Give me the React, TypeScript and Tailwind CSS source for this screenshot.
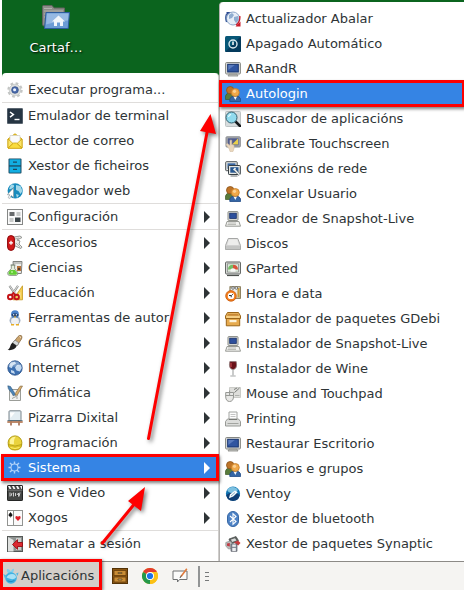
import type { ReactNode } from "react"

type Item = { label: string; icon: ReactNode; sub?: boolean; active?: boolean }

function Icon({ children }: { children: ReactNode }) {
    return (
        <svg viewBox="0 0 16 16" className="h-4 w-4 shrink-0" aria-hidden="true">
            {children}
        </svg>
    )
}

const gear = (
    <Icon>
        <circle cx="8" cy="8" r="6.4" fill="none" stroke="#c3c5c4" strokeWidth="2.6" strokeDasharray="2.6 2.4" />
        <circle cx="8" cy="8" r="5.8" fill="#dcdedd" stroke="#c3c5c4" strokeWidth=".7" />
        <circle cx="8" cy="8" r="3.3" fill="#4b6cac" stroke="#34518c" strokeWidth=".8" />
        <circle cx="7.6" cy="7.8" r="1.5" fill="#f1f5fc" />
    </Icon>
)

const terminal = (
    <Icon>
        <rect x=".2" y=".2" width="15.6" height="15.6" rx=".6" fill="#263543" />
        <path d="M3 4l3.4 2.6L3 9.2" fill="none" stroke="#fff" strokeWidth="1.5" />
        <path d="M7.5 11.5h5" stroke="#fff" strokeWidth="1.4" />
    </Icon>
)

const mail = (
    <Icon>
        <path d="M1 6L8 .8 15 6v9H1z" fill="#f5d236" stroke="#cfa50f" />
        <path d="M3 2.5h10v7L8 12 3 9.500z" fill="#fafafa" stroke="#cfcfc8" strokeWidth=".7" />
        <path d="M1 6l5 4.500L1 15zM15 6l-5 4.500 5 4.500z" fill="#fae56a" stroke="#cfa50f" strokeWidth=".8" />
        <path d="M1 15.300l5.500-5.300h3L15 15.300z" fill="#f9dc3e" stroke="#cfa50f" strokeWidth=".8" />
    </Icon>
)

const fileCabinet = (
    <Icon>
        <rect x="1.500" y=".5" width="13" height="15" rx="1" fill="#1c4960" />
        <rect x="2.500" y="1.300" width="11" height="6" fill="#12aee2" />
        <rect x="2.500" y="8.600" width="11" height="6" fill="#12aee2" />
        <path d="M6 4.200h4M6 11.400h4" stroke="#1c4960" strokeWidth="1.300" />
    </Icon>
)

const browser = (
    <Icon>
        <circle cx="8.200" cy="7.800" r="7.600" fill="#188bbd" />
        <path d="M4 1.500C7 1 8 3 6.500 4.500 5 5 4 7 2 6zM9 2l4.500 1 2 5-2 3-2-3-2.500-1zM9 11l3 1-2 3z" fill="#a3d8e9" />
        <path d="M6.500 5v9.500l-2.200-2-1.500 3-1.600-.8 1.500-3H.2z" fill="#fff" stroke="#8b9497" strokeWidth=".6" />
    </Icon>
)

const settings = (
    <Icon>
        <rect x=".5" y=".5" width="15" height="15" fill="#fafafa" stroke="#858786" />
        <rect x="2.500" y="3" width="5" height="4" fill="#686b6c" />
        <rect x="9.500" y="3" width="4" height="4" fill="#c8cac9" />
        <rect x="2.500" y="9" width="4" height="4" fill="#c8cac9" />
        <rect x="8" y="8.500" width="5.500" height="4.500" fill="#3c4549" />
    </Icon>
)

const accessories = (
    <Icon>
        <path d="M7 2l6-1 2 1.500-5 2.500 3 1-1 3 3 3-1 1.500-6-2.500z" fill="#e9e9e7" stroke="#8c8e8b" strokeWidth=".9" />
        <path d="M8 4l4-1M9 8l4 4" stroke="#a2a4a1" strokeWidth=".8" />
        <rect x=".6" y=".6" width="6.800" height="14.800" rx="3.400" fill="#d2191b" stroke="#8c0709" />
        <path d="M4 5.800v4M2 7.800h4" stroke="#fff" strokeWidth="1.300" />
    </Icon>
)

const science = (
    <Icon>
        <path d="M6 1.500h9l-.7 12H7z" fill="#ededeb" stroke="#80827e" />
        <path d="M6 3h9" stroke="#999b97" />
        <path d="M10 6h4v5h-4z" fill="#b7713b" />
        <path d="M11 8h2v2h-2z" fill="#503c2c" />
        <path d="M3.500 5h5M4.300 5v3.500L.8 12.500q-.5 2.800 1.500 2.900h7q2-.2 1.300-2.900l-3-4V5z" fill="#e4eddc" stroke="#788473" strokeWidth=".8" />
        <path d="M1.700 12l1.800-2h4.300l2 2.500q.8 2-1 2.200H2.700q-1.700-.4-1-2.700z" fill="#62ce33" />
        <circle cx="5" cy="12" r="1" fill="#b9ef96" />
    </Icon>
)

const education = (
    <Icon>
        <path d="M15.500.8v14H6z" fill="#f4cd50" stroke="#c79a1f" strokeWidth=".8" />
        <path d="M13.300 7v5.500H10z" fill="#fff6cf" />
        <path d="M2.500.8L9.500 11M11 .8L4 11" stroke="#8f9290" strokeWidth="2.200" />
        <path d="M2.700 1L9 10M10.800 1L4.500 10" stroke="#e8e8e6" strokeWidth=".9" />
        <ellipse cx="3.300" cy="12" rx="2.300" ry="2.300" fill="none" stroke="#c41216" strokeWidth="2" />
        <ellipse cx="9.600" cy="12" rx="2.300" ry="2.300" fill="none" stroke="#c41216" strokeWidth="2" />
        <path d="M4.500 10.500L6.500 8l2 2.500" fill="none" stroke="#c41216" strokeWidth="1.800" />
    </Icon>
)

const authoring = (
    <Icon>
        <ellipse cx="8" cy="10.500" rx="5.500" ry="4.500" fill="#a3b1c3" />
        <ellipse cx="8" cy="4.400" rx="3.900" ry="4.100" fill="#4a82cb" />
        <path d="M4.700 4.300q3.300-2 6.600 0v1.500q-3.300 2-6.600 0z" fill="#27426c" />
        <circle cx="6.600" cy="4.800" r=".7" fill="#dbe7f6" />
        <circle cx="9.400" cy="4.800" r=".7" fill="#dbe7f6" />
        <ellipse cx="8" cy="11.200" rx="3.900" ry="3.700" fill="#eff1f4" />
        <path d="M6.500 6.500h3L8 8z" fill="#f1b326" />
        <path d="M4 14.800h3M9 14.800h3" stroke="#e8ae25" strokeWidth="1.400" />
    </Icon>
)

const graphics = (
    <Icon>
        <path d="M11 1.500q2-2 3.300-.9t.2 3.400L10.500 10 6.700 7z" fill="#caa36c" stroke="#80613a" strokeWidth=".7" />
        <path d="M12.500 1.500l1.500 1.200" stroke="#f5e5cf" />
        <path d="M8 5l4 3-2 3-4.500-3z" fill="#d7dada" stroke="#777" strokeWidth=".7" />
        <path d="M5.500 7.800l4.200 3C8.500 14.200 5 15.600.6 15 4 13 2.800 9.500 5.500 7.800z" fill="#202020" />
    </Icon>
)

const globe = (
    <Icon>
        <circle cx="8" cy="8" r="7.200" fill="#3d70b1" stroke="#224b85" strokeWidth=".8" />
        <path d="M4 2.500l4-.8 1 2-3 1.500-1.200 3L2 7q0-3 2-4.500zM10 5l3.500-.5L14.800 8l-2 3.500-3.300-1-1.500-3zM4 10l3 1 1 3-4-1.500z" fill="#c5daf0" />
        <ellipse cx="7.500" cy="4" rx="5" ry="2.800" fill="#fff" opacity=".3" />
    </Icon>
)

const office = (
    <Icon>
        <path d="M2.500 4.500h11v11h-11z" fill="#f2f2f0" stroke="#9b9d98" />
        <path d="M5 13.500l6-3M5 10h2M9 13h2" stroke="#9fa19e" />
        <path d="M.8.8l2.700.7 5 8-1.800 1.300-5.300-7z" fill="#4b83b7" stroke="#2f597e" strokeWidth=".6" />
        <path d="M15.500 1L13 1.200 8.300 8.500l.2 2 2-.7z" fill="#dbae6b" stroke="#79603b" strokeWidth=".6" />
    </Icon>
)

const whiteboard = (
    <Icon>
        <path d="M4 10v5.500M12 10v5.500" stroke="#a1684c" strokeWidth="1.600" />
        <rect x="2" y=".8" width="12" height="9.700" rx=".8" fill="#e3edf2" stroke="#78848b" />
        <path d="M3 2.500h5L3.500 8z" fill="#fff" />
        <path d="M.3 12h15.400" stroke="#b87e5c" strokeWidth="1.800" />
        <path d="M.5 10.600h15" stroke="#536d7a" />
    </Icon>
)

const helmet = (
    <Icon>
        <circle cx="8" cy="7.800" r="6.900" fill="#ead33d" stroke="#b39c12" />
        <path d="M1.200 9.500q6.800 3 13.600 0-.4 5.500-6.800 5.500t-6.800-5.500z" fill="#dec328" stroke="#b39c12" strokeWidth=".8" />
        <path d="M3 9V5q2-3.500 6-3.300-2.500 1.500-2 7.500z" fill="#fdf49b" />
        <path d="M3.500 12.500q4.500 2 9 0" fill="none" stroke="#fff16e" />
    </Icon>
)

const system = (
    <Icon>
        <circle cx="7.500" cy="7.500" r="3.500" fill="none" stroke="#b1d2f8" strokeWidth="1.100" />
        <path d="M7.500 1.500v2.500M7.500 11v2.500M1.500 7.500h2.500M11 7.500h2.500M3 3l2.100 2.100M9.900 9.900L12 12M12 3L9.900 5.100M5.100 9.900L3 12" stroke="#b1d2f8" strokeWidth="1.400" />
    </Icon>
)

const video = (
    <Icon>
        <rect x=".5" y=".5" width="15" height="15" rx=".6" fill="#444644" stroke="#242524" />
        <path d="M1 1h2l1.500 3h-2zM5 1h2l1.500 3h-2zM9 1h2l1.500 3h-2zM13 1h2v3h-.5z" fill="#f5f5f5" />
        <path d="M.5 5.200h15" stroke="#888" strokeWidth=".7" />
        <path d="M3 7.500v4M5 8l-1 3M6.500 7.500v4M8.500 8v3M10 10l1.500-2v3.500M13 7.500l-1 4" stroke="#dedede" strokeWidth=".9" />
    </Icon>
)

const cards = (
    <Icon>
        <rect x=".5" y=".5" width="6" height="15" fill="#fff" stroke="#929491" />
        <rect x="6.500" y=".5" width="9" height="15" fill="#fafafa" stroke="#929491" />
        <path d="M3.500 2.500q2 2 1.600 3.200-.5.800-1.600.2-1.100.6-1.600-.2Q1.500 4.500 3.500 2.500zM3.500 5v2.500" fill="#111" stroke="#111" strokeWidth=".6" />
        <path d="M11 11L8.400 8.200q-.4-2 1.300-2.100.9 0 1.300.9.400-.9 1.300-.9 1.700.1 1.300 2.100z" fill="#de1f27" />
    </Icon>
)

const logout = (
    <Icon>
        <rect x=".5" y=".5" width="15" height="15" fill="#8f9391" stroke="#565a58" />
        <path d="M1 1l5.500 3v11.500H1z" fill="#dfe1df" />
        <path d="M9 2h5v12H9z" fill="#c9cdca" />
        <path d="M5.500 8.500l5-4.800v2.800h5v4h-5v2.800z" fill="#dc2931" stroke="#950c13" strokeWidth=".9" />
    </Icon>
)

const updater = (
    <Icon>
        <path d="M3 1v6M1.500 2h5" stroke="#2c4b91" strokeWidth="1.800" />
        <circle cx="8" cy="7.500" r="6.500" fill="#e6eef7" stroke="#8ea6c8" />
        <path d="M4 4l3-2 2 2-2 3-3 1zM9 6l4-1 1 4-3 3-2-3z" fill="#8fadd0" />
        <path d="M1.500 3q-1.500 4 0 8" fill="none" stroke="#274c91" strokeWidth="1.200" />
        <path d="M14.800 5q.7 5.500-3.800 9.200" fill="none" stroke="#ca1b2a" strokeWidth="1.300" />
        <path d="M10.500 15.500h5v-5z" fill="#ca1b2a" />
    </Icon>
)

const power = (
    <Icon>
        <rect x="0" y="0" width="16" height="16" rx="1.500" fill="#075777" />
        <path d="M0 16L16 0v14.500q0 1.500-1.500 1.500z" fill="#043a5c" />
        <circle cx="8" cy="8" r="4" fill="none" stroke="#dce9ee" strokeWidth="1.400" />
        <path d="M8 5.500v3.500" stroke="#fff" strokeWidth="1.500" />
    </Icon>
)

const monitor = (
    <Icon>
        <rect x=".6" y="1.500" width="14.800" height="11.500" rx="1" fill="#dededb" stroke="#858782" />
        <rect x="2.700" y="3.300" width="10.600" height="7.700" fill="#3055a0" stroke="#16346f" />
        <path d="M3.300 4h6.500L3.300 9z" fill="#5a7bbd" />
        <path d="M4 13.200h8l1 1.800H3z" fill="#c4c6c2" stroke="#858782" strokeWidth=".8" />
    </Icon>
)

const users = (
    <Icon>
        <path d="M.5 13.500V10Q1 7 5 7t4 3v3.500z" fill="#587b3b" stroke="#3d5926" strokeWidth=".7" />
        <circle cx="5.200" cy="4.200" r="3.700" fill="#bf7427" stroke="#8a5219" strokeWidth=".8" />
        <path d="M4.800 15.500v-2.500q.7-3 5.400-3t5.400 3v2.500z" fill="#3465a4" stroke="#204a87" strokeWidth=".8" />
        <path d="M8.500 10.500l1.800 3.500 1.800-3.500z" fill="#f5f7fa" />
        <circle cx="10.300" cy="6.500" r="4" fill="#f0a94a" stroke="#c07a28" strokeWidth=".8" />
        <circle cx="9.500" cy="5.300" r="1.600" fill="#fbd194" />
    </Icon>
)

const search = (
    <Icon>
        <rect x=".5" y=".5" width="15" height="15" rx="1" fill="#d7dcdd" stroke="#bdc3c4" />
        <path d="M10.500 10.500l4.500 4.500" stroke="#16191b" strokeWidth="2.500" strokeLinecap="round" />
        <circle cx="6.500" cy="6.500" r="5.500" fill="#91dbee" stroke="#34606f" />
        <path d="M3.500 6q.3-2.300 2.600-2.700" fill="none" stroke="#e3fbff" strokeWidth="1.200" />
    </Icon>
)

const touchscreen = (
    <Icon>
        <rect x="1" y=".8" width="14.300" height="10.200" rx=".8" fill="#a4a7ac" stroke="#8a8d92" />
        <rect x="2.800" y="2.300" width="10.700" height="7" fill="#525d8e" />
        <path d="M13 2.500v6H7z" fill="#ead04b" />
        <path d="M4.300 13L1 8.500l1.500-1L5 9.500V4.200h1.700v4.300l2.300.8v3.200L8 15.500H5z" fill="#ead7bd" stroke="#d3bfa5" strokeWidth=".6" />
    </Icon>
)

const network = (
    <Icon>
        <rect x=".7" y=".7" width="11.500" height="9" rx=".7" fill="#e6e8e5" stroke="#4c5254" />
        <rect x="2.500" y="2.300" width="8" height="5.500" fill="#3867a4" />
        <rect x="3.500" y="4.500" width="11.800" height="9" rx=".7" fill="#e6e8e5" stroke="#353e43" />
        <rect x="5.300" y="6.200" width="8.200" height="5.500" fill="#275892" />
        <path d="M5.500 15h7" stroke="#6c7274" />
        <path d="M9.500 8.500l5 5.300" stroke="#4c5254" strokeWidth="2.500" />
        <path d="M9.500 8.500l5 5.300M8.500 9l2-2" stroke="#edf4f7" strokeWidth="1.500" />
    </Icon>
)

const computer = (
    <Icon>
        <rect x="3" y=".6" width="10" height="8.800" rx=".7" fill="#deded9" stroke="#888a85" />
        <rect x="4.700" y="2.200" width="6.600" height="5.200" fill="#2d4f9c" stroke="#162f69" strokeWidth=".8" />
        <path d="M2 10.500h12l1.500 4.700H.5z" fill="#f2f2f0" stroke="#989a95" />
        <path d="M3 12h8M2.500 13.500H11" stroke="#b4b6b0" strokeWidth=".9" />
    </Icon>
)

const disk = (
    <Icon>
        <path d="M3.300 2.500h9.400L15.500 9.500v4H.5v-4z" fill="#dededd" stroke="#a5a6a5" />
        <path d="M.8 9.500h14.400v3.700H.8z" fill="#c4c5c4" />
        <path d="M3.800 3.500h8.400L13.500 9h-11z" fill="#ededec" />
    </Icon>
)

const gparted = (
    <Icon>
        <rect x=".6" y="1" width="14.800" height="12" rx=".7" fill="#e2e4e1" stroke="#575b58" />
        <rect x="2.500" y="2.800" width="11" height="8.300" fill="#dceadb" stroke="#7e827e" strokeWidth=".7" />
        <path d="M8 8.500V3.800Q3 3.800 3 8.500z" fill="#74bd66" />
        <path d="M8 8.500h5Q13 4 8 3.800z" fill="#d8533b" />
        <path d="M5.500 8.500q2.500-2.500 5 0v2.300h-5z" fill="#f8f8f7" />
        <path d="M2 14.500h12" stroke="#4d514e" strokeWidth="1.200" />
    </Icon>
)

const clock = (
    <Icon>
        <rect x="5" y=".8" width="10.300" height="11.500" fill="#ececea" stroke="#75643b" />
        <path d="M13.500 2v9.500" stroke="#c99b3a" strokeWidth="2.200" />
        <circle cx="8" cy="2" r="1.300" fill="#fff" stroke="#55595b" strokeWidth=".8" />
        <circle cx="11.300" cy="2" r="1.300" fill="#fff" stroke="#55595b" strokeWidth=".8" />
        <circle cx="6" cy="9.900" r="5.300" fill="#f57e1d" stroke="#c65a0b" strokeWidth=".8" />
        <circle cx="6" cy="9.900" r="3.200" fill="#fff" />
        <path d="M4 9.500h2.500l1.300-1.300M6.200 9.800v1.500" fill="none" stroke="#303030" />
    </Icon>
)

const box = (
    <Icon>
        <path d="M1.300 6.500h13.400v8.300H1.300z" fill="#e6aa4e" stroke="#9a6519" />
        <path d="M2.500 1.500h11L15.500 5v2.500H.5V5z" fill="#efbd67" stroke="#9a6519" />
        <path d="M3 2.800h10l1 2H2z" fill="#c78837" />
        <path d="M1.500 6h13" stroke="#fbe0a2" />
        <rect x="4.500" y="9" width="7" height="2.200" fill="#fcf3dc" />
    </Icon>
)

const wine = (
    <Icon>
        <path d="M4.800.6h6.400q1.600 7.400-3.200 8Q3.200 8 4.800.6z" fill="#6b1118" stroke="#8e7778" strokeWidth=".8" />
        <path d="M6 2v4" stroke="#c0474d" strokeWidth="1.200" />
        <path d="M8 8.500v6" stroke="#a7a8a8" strokeWidth="1.200" />
        <path d="M5.300 15h5.400" stroke="#b4b6b6" strokeWidth="1.200" />
    </Icon>
)

const mouse = (
    <Icon>
        <path d="M4.500 1.500h11v10h-11z" fill="#dededb" stroke="#cbccc8" />
        <path d="M14.500 2L9.500 6.500M9 3.500l3-1.500" stroke="#7d807c" />
        <path d="M10 9.500h4.500" stroke="#b0b2ae" />
        <path d="M.7 6.500h7.800V11q-.3 4.400-3.900 4.500Q1 15.400.7 11z" fill="#e8e8e6" stroke="#979995" />
        <path d="M.7 9.500h7.800M4.600 4.500v5" stroke="#979995" />
    </Icon>
)

const printer = (
    <Icon>
        <path d="M4 1h8v8H4z" fill="#fdfdfd" stroke="#a2a4a1" />
        <path d="M5.500 3.500h5M5.500 5.500h5" stroke="#c4c4c4" />
        <path d="M2.500 8h11l2 2.500v4.500H.5v-4.500z" fill="#dcdddb" stroke="#989a96" />
        <path d="M4 8.500h8" stroke="#777975" />
        <path d="M2.500 12.500h11" stroke="#a2a4a0" />
    </Icon>
)

const ventoy = (
    <Icon>
        <circle cx="8" cy="7.700" r="7.100" fill="#0e73b2" />
        <path d="M1.200 9q7-5.500 13.600 0-1 5.800-6.800 6-5.800-.2-6.800-6z" fill="#0e3f75" />
        <ellipse cx="7.500" cy="4" rx="5.200" ry="3" fill="#7cc1e1" />
        <path d="M4 12.300l1-4L10 4.500l2.700 1.800-4.500 4.200z" fill="#f3fafd" />
        <path d="M6 10l4-3.500" stroke="#87adc5" />
    </Icon>
)

const bluetooth = (
    <Icon>
        <rect x="2.500" y=".5" width="11" height="15" rx="5.500" fill="#4e83c6" stroke="#3566a4" />
        <path d="M5 5l6 5.500L8 13.300V2.700L11 5.500 5 11" fill="none" stroke="#fff" strokeWidth="1.100" />
    </Icon>
)

const synaptic = (
    <Icon>
        <path d="M4 3l7-2.500 2.500 4-8 4z" fill="#5d6160" stroke="#474a49" strokeWidth=".7" />
        <path d="M6 3.500l4-1.300 1.500 2.300-4.500 1.500z" fill="#d9dbda" />
        <path d="M.8 6.500L5 5l3 3-.5 4.500-4 .5L.8 10z" fill="#bababa" stroke="#8d8f8e" strokeWidth=".7" />
        <path d="M2 7.500L4.800 7v3.500L2 9.700z" fill="#c13b44" />
        <path d="M9 6.500l4-2 2.500 2.500-2.300 2.500z" fill="#c83a3d" />
        <path d="M6 8h6v7.300H6z" fill="#848a95" stroke="#5b6069" strokeWidth=".7" />
        <path d="M7.300 8.500h3.500v2.300H7.300zM7.300 12h3.500v3H7.300z" fill="#eceef0" />
    </Icon>
)

const runItems: Item[] = [{ label: "Executar programa...", icon: gear }]

const launchers: Item[] = [
    { label: "Emulador de terminal", icon: terminal },
    { label: "Lector de correo", icon: mail },
    { label: "Xestor de ficheiros", icon: fileCabinet },
    { label: "Navegador web", icon: browser },
]

const configItems: Item[] = [{ label: "Configuración", icon: settings, sub: true }]

const categories: Item[] = [
    { label: "Accesorios", icon: accessories, sub: true },
    { label: "Ciencias", icon: science, sub: true },
    { label: "Educación", icon: education, sub: true },
    { label: "Ferramentas de autor", icon: authoring, sub: true },
    { label: "Gráficos", icon: graphics, sub: true },
    { label: "Internet", icon: globe, sub: true },
    { label: "Ofimática", icon: office, sub: true },
    { label: "Pizarra Dixital", icon: whiteboard, sub: true },
    { label: "Programación", icon: helmet, sub: true },
    { label: "Sistema", icon: system, sub: true, active: true },
    { label: "Son e Video", icon: video, sub: true },
    { label: "Xogos", icon: cards, sub: true },
]

const sessionItems: Item[] = [{ label: "Rematar a sesión", icon: logout }]

const groups = [runItems, launchers, configItems, categories, sessionItems]

const systemItems: Item[] = [
    { label: "Actualizador Abalar", icon: updater },
    { label: "Apagado Automático", icon: power },
    { label: "ARandR", icon: monitor },
    { label: "Autologin", icon: users, active: true },
    { label: "Buscador de aplicacións", icon: search },
    { label: "Calibrate Touchscreen", icon: touchscreen },
    { label: "Conexións de rede", icon: network },
    { label: "Conxelar Usuario", icon: users },
    { label: "Creador de Snapshot-Live", icon: computer },
    { label: "Discos", icon: disk },
    { label: "GParted", icon: gparted },
    { label: "Hora e data", icon: clock },
    { label: "Instalador de paquetes GDebi", icon: box },
    { label: "Instalador de Snapshot-Live", icon: computer },
    { label: "Instalador de Wine", icon: wine },
    { label: "Mouse and Touchpad", icon: mouse },
    { label: "Printing", icon: printer },
    { label: "Restaurar Escritorio", icon: monitor },
    { label: "Usuarios e grupos", icon: users },
    { label: "Ventoy", icon: ventoy },
    { label: "Xestor de bluetooth", icon: bluetooth },
    { label: "Xestor de paquetes Synaptic", icon: synaptic },
]

// red frame drawn around the entry to click
function Mark() {
    return <span className="pointer-events-none absolute -inset-x-px -inset-y-px z-10 border-3 border-[#fe0000] shadow-[1px_2px_3px_rgba(0,0,0,0.5)]" />
}

function MenuItem({ item }: { item: Item }) {
    return (
        <li className="relative">
            <button
                type="button"
                className={`flex h-[25px] w-full items-center gap-[5px] pr-2 pl-[5px] text-left whitespace-nowrap ${item.active ? "bg-[#3584e4] text-white" : "text-[#2e3436]"}`}
            >
                {item.icon}
                <span className="grow">{item.label}</span>
                {item.sub && (
                    <svg viewBox="0 0 6 12" className="h-3 w-[6px] shrink-0" aria-hidden="true">
                        <path d="M0 0L6 6 0 12z" fill="currentColor" />
                    </svg>
                )}
            </button>
            {item.active && <Mark />}
        </li>
    )
}

function HomeFolder() {
    return (
        <button type="button" className="flex w-[108px] flex-col items-center gap-[10px] pt-1 text-white">
            <svg viewBox="0 0 28 26" className="h-[26px] w-7" aria-hidden="true">
                <path d="M.5 2.500q0-1 1-1H10l2 2.500h10.500v18H2q-1.500 0-1.500-2z" fill="#8d8d89" stroke="#62635f" />
                <path d="M2 4.500h8M2 7h19M2 10h3M2 13h3" stroke="#b1b1ad" />
                <path d="M4 8.500h23.500l-1.300 16H2.500z" fill="#6c9cd5" stroke="#2d5c9c" />
                <path d="M5 9.500h21.500l-.5 7q-10 .5-22 4z" fill="#96b9e3" />
                <path d="M16.500 11.500l6.500 6h-2v4.500h-3v-3.500h-3V22h-3v-4.500h-2z" fill="#f2f6fb" />
            </svg>
            <span className="[text-shadow:1px_1px_2px_#000]">Cartaf…</span>
        </button>
    )
}

function Taskbar() {
    return (
        <footer className="flex h-[29px] items-center border-t border-[#8c8a87] bg-[#f5f4f2]">
            <div className="relative h-7 w-[102px]">
                <button type="button" className="flex h-7 w-full items-center gap-[2px] bg-[#d4cfca] pl-[3px] text-[#2e3436]">
                    <Icon>
                        <path d="M6 5.500Q3 3.500 4 1q3 0 4 3Q8.500.8 11 .8q.5 2.500-2 4.700z" fill="#7fd0ee" />
                        <circle cx="8" cy="10" r="5.800" fill="#3fb2e2" />
                        <path d="M.3 6l3.200 1.500-1.500 3zM13 5.500l2.500-1-.8 3.500z" fill="#52b8e0" />
                        <path d="M3.500 9.500Q5 6 9 6t4 3.500q-2 2.500-5 1.500t-4.500-1.500z" fill="#a9e1f5" />
                        <path d="M4.500 12.800q3.500 2 7-.3" fill="none" stroke="#1b86bb" strokeWidth=".9" />
                    </Icon>
                    Aplicacións
                </button>
                <span className="pointer-events-none absolute -top-[3px] right-0 bottom-0 left-0 z-10 border-3 border-[#fe0000] shadow-[1px_1px_3px_rgba(0,0,0,0.5)]" />
            </div>
            <nav className="flex items-center gap-[14px] pl-[10px]">
                <button type="button" aria-label="Ficheiros">
                    <svg viewBox="0 0 16 16" className="h-4 w-4" aria-hidden="true">
                        <rect x=".5" y=".5" width="15" height="15" fill="#8b5612" stroke="#533207" />
                        <path d="M2 2.500h12v5H2zM2 9h12v5H2z" fill="#c98d36" stroke="#643e0c" strokeWidth=".8" />
                        <path d="M6 4.500h4v1H6zM6 11h4v1H6z" fill="#fbe9a4" stroke="#432a0a" strokeWidth=".6" />
                    </svg>
                </button>
                <button type="button" aria-label="Chrome">
                    <svg viewBox="0 0 16 16" className="h-4 w-4" aria-hidden="true">
                        <circle cx="8" cy="8" r="8" fill="#fbc116" />
                        <path d="M8 8L1.070 4A8 8 0 0 1 14.930 4z" fill="#e33b2e" />
                        <path d="M8 8L8 16A8 8 0 0 1 1.070 4z" fill="#24984a" />
                        <path d="M8 4h6.930A8 8 0 0 1 8 16l3.460-6z" fill="#fbc116" />
                        <circle cx="8" cy="8" r="4" fill="#fff" />
                        <circle cx="8" cy="8" r="3.100" fill="#1a73e8" />
                    </svg>
                </button>
                <button type="button" aria-label="Notas">
                    <svg viewBox="0 0 16 16" className="h-4 w-4" aria-hidden="true">
                        <path d="M1 3h14v8.500H7.500L5.500 14v-2.500H1z" fill="#fafafa" stroke="#6e7072" />
                        <path d="M14.800.8L9 8.500" stroke="#e17b3c" strokeWidth="1.600" />
                        <path d="M9.300 7.500L8 10" stroke="#555" />
                    </svg>
                </button>
            </nav>
            <div className="ml-[10px] h-[21px] w-[2px] bg-[#929495]" />
            <div className="ml-[5px] flex flex-col gap-[3px]">
                <span className="h-px w-1 bg-[#77797a]" />
                <span className="h-px w-1 bg-[#77797a]" />
                <span className="h-px w-1 bg-[#77797a]" />
            </div>
        </footer>
    )
}

// arrows from the panel button up to the highlighted entries
function Arrows() {
    return (
        <svg viewBox="0 0 220 590" className="pointer-events-none absolute top-0 left-0 z-20 h-[590px] w-[220px] drop-shadow-[2px_2px_2px_rgba(0,0,0,0.55)]" aria-hidden="true">
            <g stroke="#fe0000" strokeWidth="3" strokeLinecap="round" fill="#fe0000">
                <path d="M148.500 438.500L207.500 130" />
                <path d="M102.500 543L136 502" />
            </g>
            <path d="M210.500 114l5.500 20-16-3zM145 487l-4 24-13-10z" fill="#fe0000" />
        </svg>
    )
}

function App() {
    return (
        <div className="relative overflow-hidden bg-white font-['DejaVu_Sans',sans-serif] text-[13px] leading-4">
            <main className="flex bg-[#0b641e]">
                <div className="flex w-[219px] shrink-0 flex-col border-l-2 border-white">
                    <div className="h-[73px]">
                        <HomeFolder />
                    </div>
                    <div className="grow rounded-t-sm border-r border-[#cfcdcb] bg-white pt-1">
                        {groups.map((group, i) => (
                            <ul key={i} className={i > 0 ? "border-t border-[#dfdddb]" : ""}>
                                {group.map((item) => (
                                    <MenuItem key={item.label} item={item} />
                                ))}
                            </ul>
                        ))}
                    </div>
                </div>
                <div className="grow pt-[2px]">
                    <ul className="rounded-tl-sm border-l border-[#b5b3b1] bg-white pt-1 pb-[5px]">
                        {systemItems.map((item) => (
                            <MenuItem key={item.label} item={item} />
                        ))}
                    </ul>
                </div>
            </main>
            <Taskbar />
            <Arrows />
        </div>
    )
}

export default App
